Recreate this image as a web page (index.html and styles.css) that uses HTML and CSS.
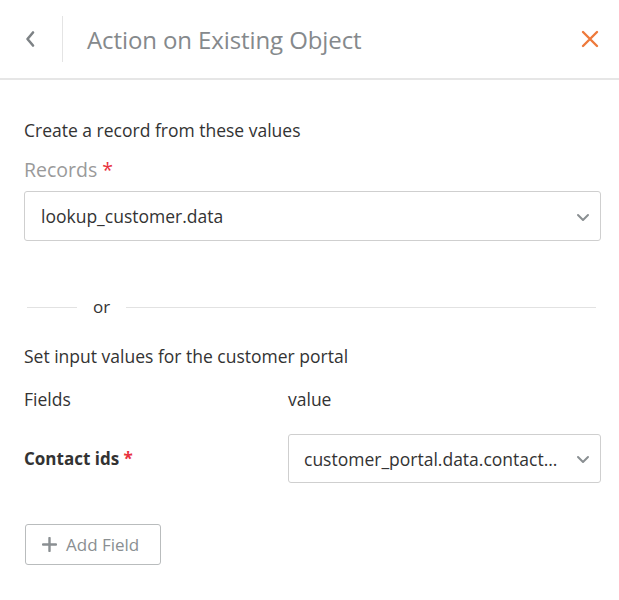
FILE: index.html
```html
<!DOCTYPE html>
<html>
<head>
<meta charset="utf-8">
<link rel="stylesheet" href="styles.css">
</head>
<body>
<div class="panel">
  <header class="header">
    <button class="back" aria-label="Back">
      <svg width="14" height="18" viewBox="0 0 14 18"><path d="M10 2.5 L4.5 9 L10 15.5" fill="none" stroke="#7d8285" stroke-width="2.6" stroke-linecap="round" stroke-linejoin="round"/></svg>
    </button>
    <div class="vdiv"></div>
    <h1 class="title">Action on Existing Object</h1>
    <button class="close" aria-label="Close">
      <svg width="18" height="18" viewBox="0 0 18 18"><path d="M2 2 L16 16 M16 2 L2 16" fill="none" stroke="#ee7a3b" stroke-width="2.4" stroke-linecap="round"/></svg>
    </button>
  </header>
  <main class="content">
    <p class="section-title">Create a record from these values</p>
    <label class="field-label">Records <span class="req">*</span></label>
    <div class="select">
      <span class="select-text">lookup_customer.data</span>
      <svg class="chev" width="14" height="9" viewBox="0 0 14 9"><path d="M2 2 L7 7 L12 2" fill="none" stroke="#8a8f92" stroke-width="2" stroke-linecap="round" stroke-linejoin="round"/></svg>
    </div>
    <div class="or-row">
      <span class="line short"></span>
      <span class="or">or</span>
      <span class="line long"></span>
    </div>
    <p class="section-title second">Set input values for the customer portal</p>
    <div class="grid-head">
      <span>Fields</span>
      <span>value</span>
    </div>
    <div class="grid-row">
      <span class="row-label">Contact ids <span class="req">*</span></span>
      <div class="select small">
        <span class="select-text">customer_portal.data.contact...</span>
        <svg class="chev" width="14" height="9" viewBox="0 0 14 9"><path d="M2 2 L7 7 L12 2" fill="none" stroke="#8a8f92" stroke-width="2" stroke-linecap="round" stroke-linejoin="round"/></svg>
      </div>
    </div>
    <button class="add-btn">
      <svg width="15" height="15" viewBox="0 0 15 15"><path d="M7.5 1 V14 M1 7.5 H14" stroke="#8a8f92" stroke-width="2.4" stroke-linecap="round"/></svg>
      <span>Add Field</span>
    </button>
  </main>
</div>
</body>
</html>
```

FILE: styles.css
```css
* { box-sizing: border-box; }
html, body { margin: 0; padding: 0; background: #fff; }
body { font-family: "Open Sans", "Noto Sans", sans-serif; color: #333; }
.panel { width: 619px; height: 600px; background: #fff; }

.header {
  height: 80px;
  display: flex;
  align-items: center;
  border-bottom: 2px solid #e6e6e6;
  padding: 0 20px 0 23px;
}
.back, .close { background: none; border: 0; padding: 0; display: flex; cursor: pointer; }
.vdiv { width: 1px; height: 46px; background: #e4e4e4; margin-left: 25px; }
.title {
  margin: 0 0 0 24px;
  font-size: 24px;
  font-weight: 400;
  color: #85898c;
  flex: 1;
  letter-spacing: -0.1px;
}

.content { padding: 38px 18px 0 24px; }
.section-title { margin: 0; font-size: 17.5px; line-height: 24px; color: #333; }
.field-label { display: block; margin-top: 16px; font-size: 19.5px; line-height: 24px; color: #9a9a9a; }
.req { color: #e8313d; }
.select {
  margin-top: 9px;
  height: 50px;
  border: 1px solid #cfcfcf;
  border-radius: 3px;
  display: flex;
  align-items: center;
  padding: 0 10px 0 16px;
}
.select-text { flex: 1; font-size: 17.5px; color: #333; white-space: nowrap; }
.chev { margin-top: 2px; }

.or-row { display: flex; align-items: center; margin-top: 54px; height: 24px; padding-left: 3px; padding-right: 5px; }
.line { height: 1px; background: #e2e2e2; }
.line.short { width: 50px; }
.line.long { flex: 1; }
.or { margin: 0 16px; font-size: 17px; color: #333; line-height: 24px; }

.section-title.second { margin-top: 25px; }
.grid-head {
  display: grid;
  grid-template-columns: 264px 1fr;
  margin-top: 19px;
  font-size: 17.5px;
  line-height: 24px;
  color: #333;
}
.grid-row {
  display: grid;
  grid-template-columns: 264px 1fr;
  align-items: center;
  margin-top: 23px;
}
.row-label { font-size: 17px; font-weight: 700; color: #333; }
.select.small { margin-top: 0; height: 49px; padding-left: 15px; }
.add-btn {
  margin-top: 41px;
  margin-left: 1px;
  height: 41px;
  width: 136px;
  border: 1px solid #b9bcbd;
  border-radius: 3px;
  background: #fff;
  display: flex;
  align-items: center;
  gap: 9px;
  padding: 0 0 0 16px;
  font-family: inherit;
  font-size: 17px;
  color: #8a8f92;
}
```
